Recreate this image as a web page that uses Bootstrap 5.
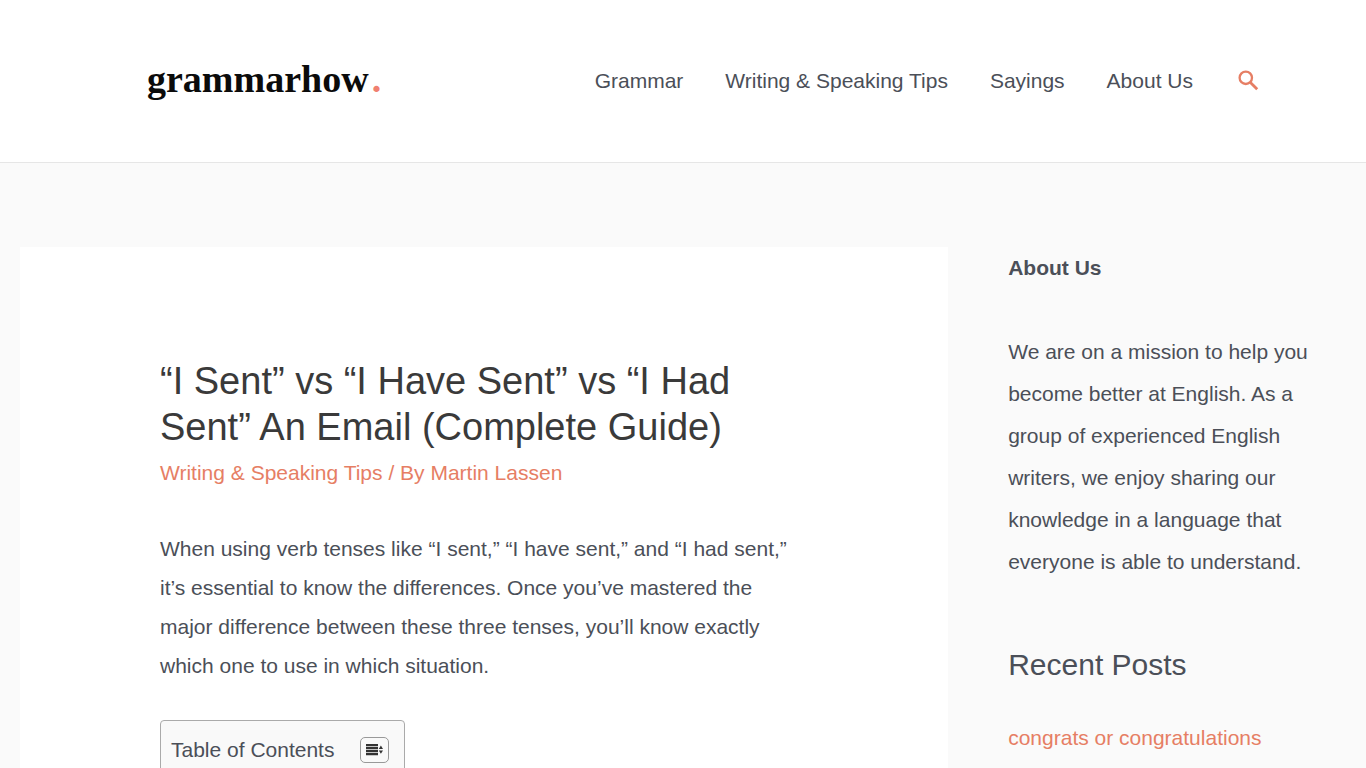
<!DOCTYPE html>
<html lang="en">
<head>
<meta charset="utf-8">
<meta name="viewport" content="width=device-width, initial-scale=1">
<title>“I Sent” vs “I Have Sent” vs “I Had Sent” An Email (Complete Guide)</title>
<link href="https://cdn.jsdelivr.net/npm/bootstrap@5.3.0/dist/css/bootstrap.min.css" rel="stylesheet">
<style>
  :root { --accent: #e67e64; --ink: #4b4f58; --heading: #3a3a3a; }
  body { font-family: "Liberation Sans", Arial, sans-serif; font-size: 21px; line-height: 39px; color: var(--ink); background: #fafafa; }
  a { color: var(--accent); text-decoration: none; }
  a:hover { color: var(--heading); }
  .site-header { min-height: 163px; border-bottom: 1px solid #e6e6e6; }
  .header-inner { max-width: 1240px; padding: 0 44px 2px 84px; }
  .brand-name { font-family: "Liberation Serif", "Times New Roman", serif; font-size: 38px; line-height: 36px; padding-bottom: 2px; font-weight: 700; color: #0b0b0b; }
  .brand-name:hover { color: #0b0b0b; }
  .brand-dot { margin-left: 3px; color: #f08070; }
  .main-menu { gap: 42px; }
  .main-menu .nav-link { color: var(--ink); padding: 0; }
  .search-toggle { margin-left: 45px; width: 21px; color: var(--accent); }
  .page-area { padding: 84px 20px 0; }
  .article-col { width: 70%; }
  .side-col { width: 30%; padding-left: 60px; line-height: 42px; }
  .post { padding: 111px 140px 84px; }
  .post h1 { font-size: 38px; line-height: 46px; color: var(--heading); }
  .post-meta { line-height: 46px; margin-bottom: 33px; }
  .post-text { margin-bottom: 35px; }
  .toc { width: 245px; padding: 9px 15px 9px 10px; background: #f9f9f9; border: 1px solid #aaa; border-radius: 4px; }
  .toc-toggle { width: 29px; height: 26px; border: 1px solid #999; border-radius: 5px; color: #333; }
  .side-col p { margin-bottom: 42px; }
  .side-title { font-size: 30px; line-height: 42px; margin: 61px 0 31px; }
</style>
<script src="https://cdn.jsdelivr.net/npm/bootstrap@5.3.0/dist/js/bootstrap.bundle.min.js" defer></script>
</head>
<body>
<header class="site-header bg-white d-flex align-items-center">
  <div class="header-inner container-fluid d-flex align-items-center justify-content-between">
    <a class="brand-name" href="#">grammarhow<span class="brand-dot">.</span></a>
    <nav class="d-flex align-items-center" aria-label="Main">
      <ul class="main-menu nav flex-nowrap text-nowrap">
        <li class="nav-item"><a class="nav-link" href="#">Grammar</a></li>
        <li class="nav-item"><a class="nav-link" href="#">Writing &amp; Speaking Tips</a></li>
        <li class="nav-item"><a class="nav-link" href="#">Sayings</a></li>
        <li class="nav-item"><a class="nav-link" href="#">About Us</a></li>
      </ul>
      <button type="button" class="search-toggle btn border-0 p-0 d-flex" aria-label="Search">
        <svg width="21" height="21" viewBox="0 0 21 21" fill="none" stroke="currentColor"><circle cx="7.8" cy="7.8" r="6.2" stroke-width="2.3"/><path d="M12.4 12.4 19.2 19.2" stroke-width="2.8"/></svg>
      </button>
    </nav>
  </div>
</header>
<div class="page-area d-flex align-items-start">
  <main class="article-col flex-shrink-0">
    <article class="post bg-white">
      <h1 class="fw-normal mb-0">“I Sent” vs “I Have Sent” vs “I Had Sent” An Email (Complete Guide)</h1>
      <div class="post-meta"><a href="#">Writing &amp; Speaking Tips</a> <a href="#">/ By Martin Lassen</a></div>
      <p class="post-text">When using verb tenses like “I sent,” “I have sent,” and “I had sent,” it’s essential to know the differences. Once you’ve mastered the major difference between these three tenses, you’ll know exactly which one to use in which situation.</p>
      <div class="toc d-flex align-items-center justify-content-between">
        <span>Table of Contents</span>
        <button type="button" class="toc-toggle btn p-0 d-flex align-items-center justify-content-center" aria-label="Toggle table of contents">
          <svg width="17" height="12" viewBox="0 0 17 12" fill="currentColor"><path d="M0 0h12v2.2H0zM0 3h12v2.2H0zM0 6h12v2.2H0zM0 9h12v2.2H0zM14.9 1.6 17 5h-4.2zM14.9 9.8 17 6.4h-4.2z"/></svg>
        </button>
      </div>
    </article>
  </main>
  <aside class="side-col">
    <p><strong>About Us</strong></p>
    <p>We are on a mission to help you become better at English. As a group of experienced English writers, we enjoy sharing our knowledge in a language that everyone is able to understand.</p>
    <h2 class="side-title fw-normal">Recent Posts</h2>
    <ul class="list-unstyled mb-0"><li><a href="#">congrats or congratulations</a></li></ul>
  </aside>
</div>
</body>
</html>
